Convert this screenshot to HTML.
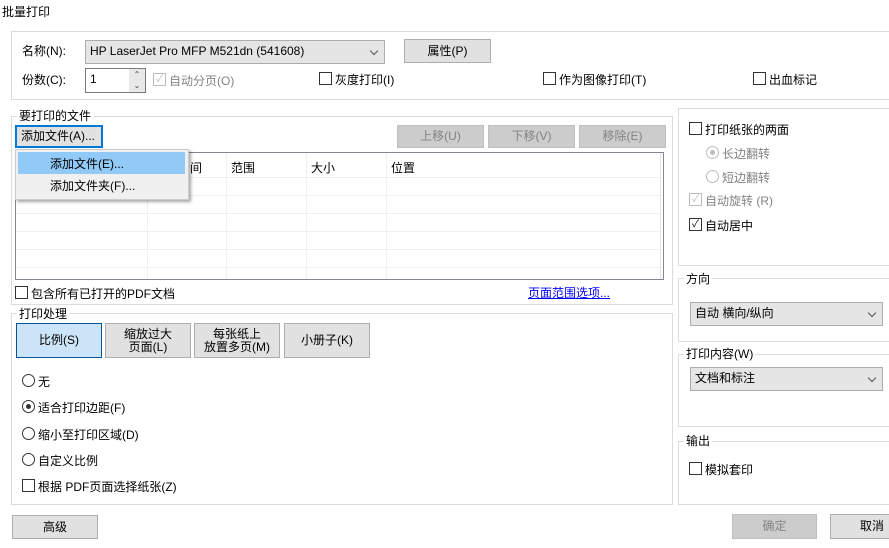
<!DOCTYPE html>
<html><head><meta charset="utf-8"><style>
*{box-sizing:border-box;margin:0;padding:0}
body{width:889px;height:548px;background:#fff;position:relative;overflow:hidden;font-family:"Liberation Sans","Noto Sans CJK SC",sans-serif;font-size:12px;color:#000}
.a{position:absolute;white-space:nowrap}
.g{position:absolute;border:1px solid #dcdcdc}
.gl{position:absolute;background:#fff;padding:0 2px;line-height:14px}
.btn{position:absolute;background:#e1e1e1;border:1px solid #adadad;text-align:center;display:flex;align-items:center;justify-content:center;line-height:13px}
.dis{background:#cccccc;border-color:#bfbfbf;color:#838383}
.cb{position:absolute;width:13px;height:13px;border:1px solid #333;background:#fff}
.rb{position:absolute;width:13px;height:13px;border:1px solid #333;border-radius:50%;background:#fff}
.combo{position:absolute;background:#e5e5e5;border:1px solid #adadad;line-height:21px;padding-left:4px}
.chev{position:absolute;right:7px;top:7px;width:6px;height:6px;border-right:1px solid #555;border-bottom:1px solid #555;transform:rotate(45deg)}
.hl{position:absolute;height:1px;background:#f0f0f0}
.vl{position:absolute;width:1px;background:#f0f0f0}
</style></head><body>
<div class="a" style="left:2px;top:3px;font-size:12px">批量打印</div>

<div class="g" style="left:11px;top:31px;width:890px;height:69px"></div>
<div class="a" style="left:22px;top:42px">名称(N):</div>
<div class="combo" style="left:85px;top:40px;width:300px;height:24px">HP LaserJet Pro MFP M521dn (541608)<div class="chev"></div></div>
<div class="btn" style="left:404px;top:39px;width:87px;height:24px">属性(P)</div>
<div class="a" style="left:22px;top:71px">份数(C):</div>
<div class="a" style="left:85px;top:68px;width:61px;height:25px;border:1px solid #7a7a7a;background:#fff;padding-left:4px;line-height:20px">1
<div style="position:absolute;left:43px;top:0;width:16px;height:23px;background:#e8e8e8;font-size:8px;line-height:11px;text-align:center;color:#444">⌃<br>⌄</div></div>
<div class="cb" style="left:153px;top:73px;border-color:#bcbcbc;color:#bcbcbc;font-size:10px;line-height:11px;text-align:center">✓</div>
<div class="a" style="left:169px;top:72px;color:#838383">自动分页(O)</div>
<div class="cb" style="left:319px;top:72px"></div><div class="a" style="left:335px;top:71px">灰度打印(I)</div>
<div class="cb" style="left:543px;top:72px"></div><div class="a" style="left:559px;top:71px">作为图像打印(T)</div>
<div class="cb" style="left:753px;top:72px"></div><div class="a" style="left:769px;top:71px">出血标记</div>

<div class="g" style="left:11px;top:116px;width:662px;height:189px"></div>
<div class="gl" style="left:17px;top:109px">要打印的文件</div>
<div class="btn" style="left:15px;top:125px;width:88px;height:23px;border:2px solid #0078d7;justify-content:flex-start;padding-left:4px">添加文件(A)...</div>
<div class="btn dis" style="left:397px;top:125px;width:87px;height:23px">上移(U)</div>
<div class="btn dis" style="left:488px;top:125px;width:87px;height:23px">下移(V)</div>
<div class="btn dis" style="left:579px;top:125px;width:87px;height:23px">移除(E)</div>
<div class="a" style="left:15px;top:152px;width:649px;height:128px;border:1px solid #828790;background:#fff"></div>
<div class="hl" style="left:16px;top:177px;width:644px"></div>
<div class="hl" style="left:16px;top:195px;width:644px"></div>
<div class="hl" style="left:16px;top:213px;width:644px"></div>
<div class="hl" style="left:16px;top:231px;width:644px"></div>
<div class="hl" style="left:16px;top:249px;width:644px"></div>
<div class="hl" style="left:16px;top:267px;width:644px"></div>
<div class="vl" style="left:147px;top:153px;height:126px"></div>
<div class="vl" style="left:226px;top:153px;height:126px"></div>
<div class="vl" style="left:306px;top:153px;height:126px"></div>
<div class="vl" style="left:386px;top:153px;height:126px"></div>
<div class="vl" style="left:660px;top:153px;height:126px;background:#e0e0e0"></div>
<div class="a" style="left:190px;top:159px">间</div>
<div class="a" style="left:231px;top:159px">范围</div>
<div class="a" style="left:311px;top:159px">大小</div>
<div class="a" style="left:391px;top:159px">位置</div>
<div class="a" style="left:15px;top:149px;width:174px;height:51px;background:#f0f0f0;border:1px solid #ccc;box-shadow:2px 2px 3px rgba(0,0,0,.35)"></div>
<div class="a" style="left:18px;top:152px;width:167px;height:22px;background:#91c9f7"></div>
<div class="a" style="left:50px;top:155px">添加文件(E)...</div>
<div class="a" style="left:50px;top:177px">添加文件夹(F)...</div>
<div class="cb" style="left:15px;top:286px"></div><div class="a" style="left:31px;top:285px">包含所有已打开的PDF文档</div>
<div class="a" style="left:528px;top:284px;color:#0000ff;text-decoration:underline">页面范围选项...</div>

<div class="g" style="left:11px;top:313px;width:662px;height:192px"></div>
<div class="gl" style="left:17px;top:307px">打印处理</div>
<div class="btn" style="left:16px;top:323px;width:86px;height:35px;background:#cce4f7;border-color:#005499">比例(S)</div>
<div class="btn" style="left:105px;top:323px;width:86px;height:35px">缩放过大<br>页面(L)</div>
<div class="btn" style="left:194px;top:323px;width:86px;height:35px">每张纸上<br>放置多页(M)</div>
<div class="btn" style="left:284px;top:323px;width:86px;height:35px">小册子(K)</div>
<div class="rb" style="left:22px;top:374px"></div><div class="a" style="left:38px;top:373px">无</div>
<div class="rb" style="left:22px;top:400px"><div style="position:absolute;left:3px;top:3px;width:5px;height:5px;border-radius:50%;background:#333"></div></div><div class="a" style="left:38px;top:399px">适合打印边距(F)</div>
<div class="rb" style="left:22px;top:427px"></div><div class="a" style="left:38px;top:426px">缩小至打印区域(D)</div>
<div class="rb" style="left:22px;top:453px"></div><div class="a" style="left:38px;top:452px">自定义比例</div>
<div class="cb" style="left:22px;top:479px"></div><div class="a" style="left:38px;top:478px">根据 PDF页面选择纸张(Z)</div>
<div class="btn" style="left:12px;top:515px;width:86px;height:24px">高级</div>

<div class="g" style="left:678px;top:108px;width:220px;height:158px"></div>
<div class="cb" style="left:689px;top:122px"></div><div class="a" style="left:705px;top:121px">打印纸张的两面</div>
<div class="rb" style="left:706px;top:146px;border-color:#bcbcbc"><div style="position:absolute;left:3px;top:3px;width:5px;height:5px;border-radius:50%;background:#bcbcbc"></div></div><div class="a" style="left:722px;top:145px;color:#838383">长边翻转</div>
<div class="rb" style="left:706px;top:170px;border-color:#bcbcbc"></div><div class="a" style="left:722px;top:169px;color:#838383">短边翻转</div>
<div class="cb" style="left:689px;top:193px;border-color:#bcbcbc;color:#bcbcbc;font-size:10px;line-height:11px;text-align:center">✓</div><div class="a" style="left:705px;top:192px;color:#838383">自动旋转 (R)</div>
<div class="cb" style="left:689px;top:218px;font-size:10px;line-height:11px;text-align:center">✓</div><div class="a" style="left:705px;top:217px">自动居中</div>

<div class="g" style="left:678px;top:278px;width:220px;height:64px"></div>
<div class="gl" style="left:684px;top:272px">方向</div>
<div class="combo" style="left:690px;top:302px;width:193px;height:24px">自动 横向/纵向<div class="chev"></div></div>

<div class="g" style="left:678px;top:354px;width:220px;height:73px"></div>
<div class="gl" style="left:684px;top:347px">打印内容(W)</div>
<div class="combo" style="left:690px;top:367px;width:193px;height:24px">文档和标注<div class="chev"></div></div>

<div class="g" style="left:678px;top:441px;width:220px;height:64px"></div>
<div class="gl" style="left:684px;top:434px">输出</div>
<div class="cb" style="left:689px;top:462px"></div><div class="a" style="left:705px;top:461px">模拟套印</div>

<div class="btn dis" style="left:732px;top:514px;width:85px;height:25px">确定</div>
<div class="btn" style="left:830px;top:514px;width:80px;height:25px;justify-content:flex-start;padding-left:29px">取消</div>
</body></html>
